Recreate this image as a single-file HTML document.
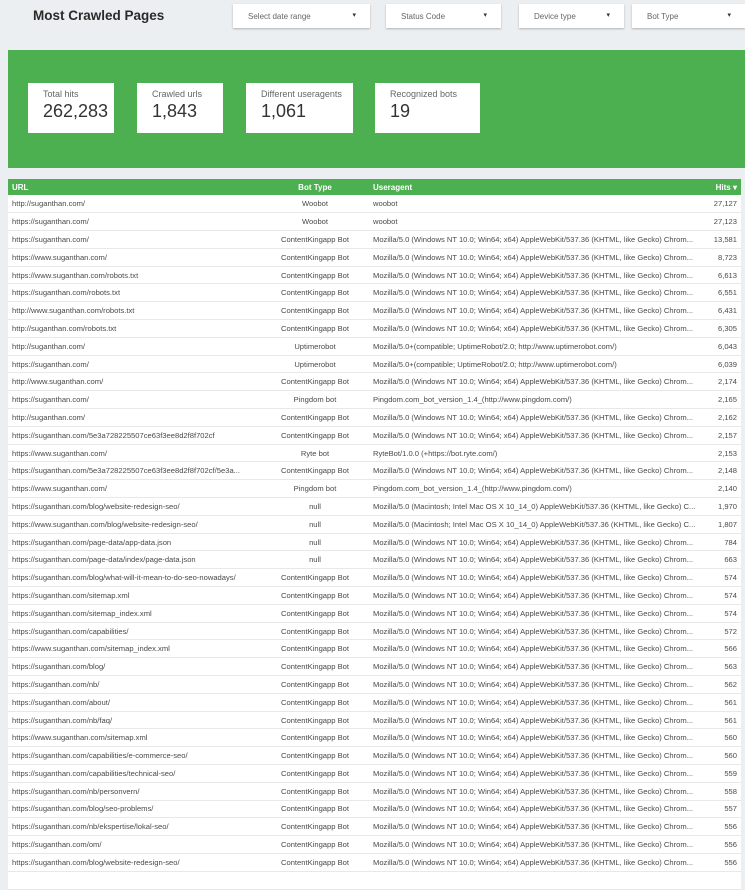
<!DOCTYPE html>
<html><head><meta charset="utf-8"><style>
*{margin:0;padding:0;box-sizing:border-box}
body{width:745px;height:874px;overflow:hidden;background:#eceff1;font-family:"Liberation Sans",sans-serif;position:relative}
.title{position:absolute;left:33px;top:8px;font-size:13.5px;font-weight:bold;color:#2a2a2a}
.dd{position:absolute;top:4px;height:24px;background:#fff;box-shadow:0 1px 2px rgba(0,0,0,.25);font-size:8px;color:#666;padding:8px 0 0 15px}
.dd:after{content:"▾";position:absolute;right:14px;top:7px;font-size:7px;color:#333}
.band{position:absolute;left:8px;top:50px;width:737px;height:118px;background:#4caf50}
.card{position:absolute;top:83px;height:50px;background:#fff;padding:6px 0 0 15px}
.card .l{font-size:9px;color:#666}
.card .v{font-size:18px;color:#333;margin-top:2px}
table{position:absolute;left:8px;top:179px;width:733px;border-collapse:collapse;font-size:7.6px;color:#4a4a4a}
th{background:#4caf50;color:#fff;font-weight:bold;height:16px;text-align:left;padding:0 4px;font-size:8px}
td{height:17.8px;background:#fff;border-bottom:1px solid #e8e8e8;padding:0 4px;white-space:nowrap;overflow:hidden}
td:nth-child(2),th:nth-child(2){text-align:center}
td:nth-child(4),th:nth-child(4){text-align:right}
</style></head><body>
<div class="title">Most Crawled Pages</div>
<div class="dd" style="left:233px;width:137px">Select date range</div>
<div class="dd" style="left:386px;width:115px">Status Code</div>
<div class="dd" style="left:519px;width:105px">Device type</div>
<div class="dd" style="left:632px;width:113px">Bot Type</div>
<div class="band"></div>
<div class="card" style="left:28px;width:86px"><div class="l">Total hits</div><div class="v">262,283</div></div>
<div class="card" style="left:137px;width:86px"><div class="l">Crawled urls</div><div class="v">1,843</div></div>
<div class="card" style="left:246px;width:107px"><div class="l">Different useragents</div><div class="v">1,061</div></div>
<div class="card" style="left:375px;width:105px"><div class="l">Recognized bots</div><div class="v">19</div></div>
<table>
<colgroup><col style="width:253px"><col style="width:108px"><col style="width:332px"><col style="width:40px"></colgroup>
<tr><th>URL</th><th>Bot Type</th><th>Useragent</th><th>Hits ▾</th></tr>
<tr><td>http://suganthan.com/</td><td>Woobot</td><td>woobot</td><td>27,127</td></tr>
<tr><td>https://suganthan.com/</td><td>Woobot</td><td>woobot</td><td>27,123</td></tr>
<tr><td>https://suganthan.com/</td><td>ContentKingapp Bot</td><td>Mozilla/5.0 (Windows NT 10.0; Win64; x64) AppleWebKit/537.36 (KHTML, like Gecko) Chrom...</td><td>13,581</td></tr>
<tr><td>https://www.suganthan.com/</td><td>ContentKingapp Bot</td><td>Mozilla/5.0 (Windows NT 10.0; Win64; x64) AppleWebKit/537.36 (KHTML, like Gecko) Chrom...</td><td>8,723</td></tr>
<tr><td>https://www.suganthan.com/robots.txt</td><td>ContentKingapp Bot</td><td>Mozilla/5.0 (Windows NT 10.0; Win64; x64) AppleWebKit/537.36 (KHTML, like Gecko) Chrom...</td><td>6,613</td></tr>
<tr><td>https://suganthan.com/robots.txt</td><td>ContentKingapp Bot</td><td>Mozilla/5.0 (Windows NT 10.0; Win64; x64) AppleWebKit/537.36 (KHTML, like Gecko) Chrom...</td><td>6,551</td></tr>
<tr><td>http://www.suganthan.com/robots.txt</td><td>ContentKingapp Bot</td><td>Mozilla/5.0 (Windows NT 10.0; Win64; x64) AppleWebKit/537.36 (KHTML, like Gecko) Chrom...</td><td>6,431</td></tr>
<tr><td>http://suganthan.com/robots.txt</td><td>ContentKingapp Bot</td><td>Mozilla/5.0 (Windows NT 10.0; Win64; x64) AppleWebKit/537.36 (KHTML, like Gecko) Chrom...</td><td>6,305</td></tr>
<tr><td>http://suganthan.com/</td><td>Uptimerobot</td><td>Mozilla/5.0+(compatible; UptimeRobot/2.0; http://www.uptimerobot.com/)</td><td>6,043</td></tr>
<tr><td>https://suganthan.com/</td><td>Uptimerobot</td><td>Mozilla/5.0+(compatible; UptimeRobot/2.0; http://www.uptimerobot.com/)</td><td>6,039</td></tr>
<tr><td>http://www.suganthan.com/</td><td>ContentKingapp Bot</td><td>Mozilla/5.0 (Windows NT 10.0; Win64; x64) AppleWebKit/537.36 (KHTML, like Gecko) Chrom...</td><td>2,174</td></tr>
<tr><td>https://suganthan.com/</td><td>Pingdom bot</td><td>Pingdom.com_bot_version_1.4_(http://www.pingdom.com/)</td><td>2,165</td></tr>
<tr><td>http://suganthan.com/</td><td>ContentKingapp Bot</td><td>Mozilla/5.0 (Windows NT 10.0; Win64; x64) AppleWebKit/537.36 (KHTML, like Gecko) Chrom...</td><td>2,162</td></tr>
<tr><td>https://suganthan.com/5e3a728225507ce63f3ee8d2f8f702cf</td><td>ContentKingapp Bot</td><td>Mozilla/5.0 (Windows NT 10.0; Win64; x64) AppleWebKit/537.36 (KHTML, like Gecko) Chrom...</td><td>2,157</td></tr>
<tr><td>https://www.suganthan.com/</td><td>Ryte bot</td><td>RyteBot/1.0.0 (+https://bot.ryte.com/)</td><td>2,153</td></tr>
<tr><td>https://suganthan.com/5e3a728225507ce63f3ee8d2f8f702cf/5e3a...</td><td>ContentKingapp Bot</td><td>Mozilla/5.0 (Windows NT 10.0; Win64; x64) AppleWebKit/537.36 (KHTML, like Gecko) Chrom...</td><td>2,148</td></tr>
<tr><td>https://www.suganthan.com/</td><td>Pingdom bot</td><td>Pingdom.com_bot_version_1.4_(http://www.pingdom.com/)</td><td>2,140</td></tr>
<tr><td>https://suganthan.com/blog/website-redesign-seo/</td><td>null</td><td>Mozilla/5.0 (Macintosh; Intel Mac OS X 10_14_0) AppleWebKit/537.36 (KHTML, like Gecko) C...</td><td>1,970</td></tr>
<tr><td>https://www.suganthan.com/blog/website-redesign-seo/</td><td>null</td><td>Mozilla/5.0 (Macintosh; Intel Mac OS X 10_14_0) AppleWebKit/537.36 (KHTML, like Gecko) C...</td><td>1,807</td></tr>
<tr><td>https://suganthan.com/page-data/app-data.json</td><td>null</td><td>Mozilla/5.0 (Windows NT 10.0; Win64; x64) AppleWebKit/537.36 (KHTML, like Gecko) Chrom...</td><td>784</td></tr>
<tr><td>https://suganthan.com/page-data/index/page-data.json</td><td>null</td><td>Mozilla/5.0 (Windows NT 10.0; Win64; x64) AppleWebKit/537.36 (KHTML, like Gecko) Chrom...</td><td>663</td></tr>
<tr><td>https://suganthan.com/blog/what-will-it-mean-to-do-seo-nowadays/</td><td>ContentKingapp Bot</td><td>Mozilla/5.0 (Windows NT 10.0; Win64; x64) AppleWebKit/537.36 (KHTML, like Gecko) Chrom...</td><td>574</td></tr>
<tr><td>https://suganthan.com/sitemap.xml</td><td>ContentKingapp Bot</td><td>Mozilla/5.0 (Windows NT 10.0; Win64; x64) AppleWebKit/537.36 (KHTML, like Gecko) Chrom...</td><td>574</td></tr>
<tr><td>https://suganthan.com/sitemap_index.xml</td><td>ContentKingapp Bot</td><td>Mozilla/5.0 (Windows NT 10.0; Win64; x64) AppleWebKit/537.36 (KHTML, like Gecko) Chrom...</td><td>574</td></tr>
<tr><td>https://suganthan.com/capabilities/</td><td>ContentKingapp Bot</td><td>Mozilla/5.0 (Windows NT 10.0; Win64; x64) AppleWebKit/537.36 (KHTML, like Gecko) Chrom...</td><td>572</td></tr>
<tr><td>https://www.suganthan.com/sitemap_index.xml</td><td>ContentKingapp Bot</td><td>Mozilla/5.0 (Windows NT 10.0; Win64; x64) AppleWebKit/537.36 (KHTML, like Gecko) Chrom...</td><td>566</td></tr>
<tr><td>https://suganthan.com/blog/</td><td>ContentKingapp Bot</td><td>Mozilla/5.0 (Windows NT 10.0; Win64; x64) AppleWebKit/537.36 (KHTML, like Gecko) Chrom...</td><td>563</td></tr>
<tr><td>https://suganthan.com/nb/</td><td>ContentKingapp Bot</td><td>Mozilla/5.0 (Windows NT 10.0; Win64; x64) AppleWebKit/537.36 (KHTML, like Gecko) Chrom...</td><td>562</td></tr>
<tr><td>https://suganthan.com/about/</td><td>ContentKingapp Bot</td><td>Mozilla/5.0 (Windows NT 10.0; Win64; x64) AppleWebKit/537.36 (KHTML, like Gecko) Chrom...</td><td>561</td></tr>
<tr><td>https://suganthan.com/nb/faq/</td><td>ContentKingapp Bot</td><td>Mozilla/5.0 (Windows NT 10.0; Win64; x64) AppleWebKit/537.36 (KHTML, like Gecko) Chrom...</td><td>561</td></tr>
<tr><td>https://www.suganthan.com/sitemap.xml</td><td>ContentKingapp Bot</td><td>Mozilla/5.0 (Windows NT 10.0; Win64; x64) AppleWebKit/537.36 (KHTML, like Gecko) Chrom...</td><td>560</td></tr>
<tr><td>https://suganthan.com/capabilities/e-commerce-seo/</td><td>ContentKingapp Bot</td><td>Mozilla/5.0 (Windows NT 10.0; Win64; x64) AppleWebKit/537.36 (KHTML, like Gecko) Chrom...</td><td>560</td></tr>
<tr><td>https://suganthan.com/capabilities/technical-seo/</td><td>ContentKingapp Bot</td><td>Mozilla/5.0 (Windows NT 10.0; Win64; x64) AppleWebKit/537.36 (KHTML, like Gecko) Chrom...</td><td>559</td></tr>
<tr><td>https://suganthan.com/nb/personvern/</td><td>ContentKingapp Bot</td><td>Mozilla/5.0 (Windows NT 10.0; Win64; x64) AppleWebKit/537.36 (KHTML, like Gecko) Chrom...</td><td>558</td></tr>
<tr><td>https://suganthan.com/blog/seo-problems/</td><td>ContentKingapp Bot</td><td>Mozilla/5.0 (Windows NT 10.0; Win64; x64) AppleWebKit/537.36 (KHTML, like Gecko) Chrom...</td><td>557</td></tr>
<tr><td>https://suganthan.com/nb/ekspertise/lokal-seo/</td><td>ContentKingapp Bot</td><td>Mozilla/5.0 (Windows NT 10.0; Win64; x64) AppleWebKit/537.36 (KHTML, like Gecko) Chrom...</td><td>556</td></tr>
<tr><td>https://suganthan.com/om/</td><td>ContentKingapp Bot</td><td>Mozilla/5.0 (Windows NT 10.0; Win64; x64) AppleWebKit/537.36 (KHTML, like Gecko) Chrom...</td><td>556</td></tr>
<tr><td>https://suganthan.com/blog/website-redesign-seo/</td><td>ContentKingapp Bot</td><td>Mozilla/5.0 (Windows NT 10.0; Win64; x64) AppleWebKit/537.36 (KHTML, like Gecko) Chrom...</td><td>556</td></tr>
<tr><td>&nbsp;</td><td></td><td></td><td></td></tr>
</table>
</body></html>
